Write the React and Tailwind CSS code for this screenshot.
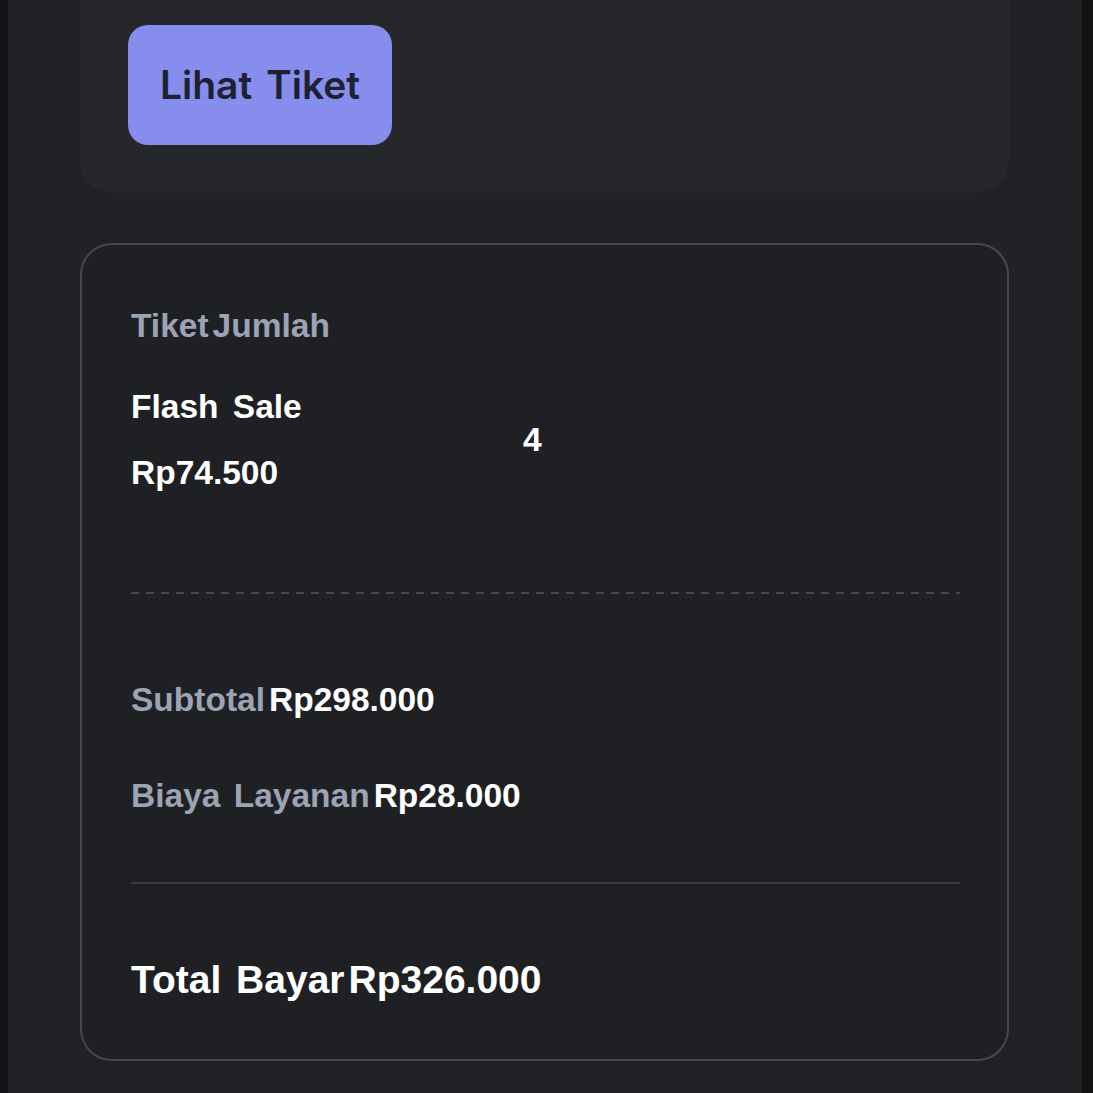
import React from 'react';

const Row = ({ label, value }) => (
    <div className="flex items-baseline gap-[4px] text-[33.5px] font-bold leading-[38px] [word-spacing:4px]">
        <span className="text-[#9ca4b4]">{label}</span>
        <span className="text-white">{value}</span>
    </div>
);

const App = () => {
    return (
        <div className="flex w-full h-[1093px] bg-[#212226] overflow-hidden font-['Liberation_Sans',Arial,sans-serif]">
            <div className="w-[8px] shrink-0 bg-[#121314]"></div>

            <div className="flex-1 flex flex-col pl-[72px] pr-[73px]">
                {/* Ticket action card */}
                <div className="bg-[#25272b] rounded-b-[32px] pt-[25px] pb-[48px] pl-[48px]">
                    <a
                        href="#"
                        className="w-[264px] h-[120px] rounded-[20px] bg-[#868ded] flex items-center justify-center font-['Inter',sans-serif] font-semibold text-[39px] text-[#1e2130] underline decoration-[#7b96ee] decoration-1 underline-offset-[4px] [word-spacing:4px]"
                    >
                        Lihat Tiket
                    </a>
                </div>

                {/* Order summary */}
                <div className="mt-[50px] border-2 border-[#46484e] rounded-[32px] bg-[#1f2024] pt-[62px] pb-[57px] pl-[49px] pr-[47px]">
                    <div className="flex gap-[4px] text-[33.5px] font-bold leading-[38px] text-[#9ca4b4]">
                        <span>Tiket</span>
                        <span>Jumlah</span>
                    </div>

                    <div className="flex items-center mt-[43px]">
                        <div className="w-[392px] flex flex-col gap-[28px] text-[33.5px] font-bold leading-[38px] text-white [word-spacing:5px]">
                            <span>Flash Sale</span>
                            <span>Rp74.500</span>
                        </div>
                        <span className="text-[33.5px] font-bold leading-[38px] text-white">4</span>
                    </div>

                    <div className="mt-[100px] h-[2px] bg-[repeating-linear-gradient(to_right,#46484e_0px,#46484e_8px,transparent_8px,transparent_15px)]"></div>

                    <div className="mt-[87px]">
                        <Row label="Subtotal" value="Rp298.000" />
                    </div>
                    <div className="mt-[58px]">
                        <Row label="Biaya Layanan" value="Rp28.000" />
                    </div>

                    <div className="mt-[67px] h-[2px] bg-[#3a3c42]"></div>

                    <div className="mt-[73px] flex items-baseline gap-[4px] text-[39px] font-bold leading-[45px] text-white [word-spacing:4px]">
                        <span>Total Bayar</span>
                        <span>Rp326.000</span>
                    </div>
                </div>
            </div>

            <div className="w-[11px] shrink-0 bg-[#121212]"></div>
        </div>
    );
};

export default App;
